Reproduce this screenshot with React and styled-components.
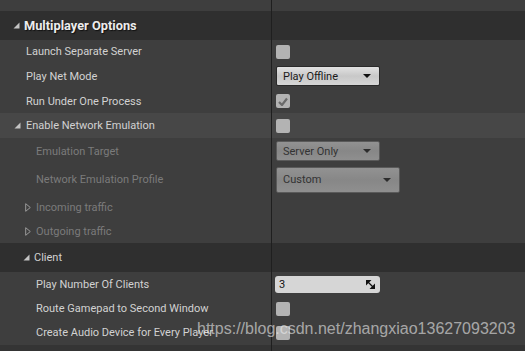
import React from "react";
import styled, { createGlobalStyle, css } from "styled-components";

const Global = createGlobalStyle`
  html, body { margin: 0; padding: 0; background: #3d3d3d; }
  body { width: 525px; height: 351px; overflow: hidden; font-family: Roboto, "Noto Sans", sans-serif; }
`;

const Panel = styled.div`
  position: relative;
  width: 525px;
  height: 351px;
  display: flex;
  flex-direction: column;
  background: #3d3d3d;
  overflow: hidden;
`;

const bgFor = {
  header: "#2f2f2f",
  normal: "#3e3e3e",
  hover: "#474747",
  bottom: "#343434",
};

const Row = styled.div`
  display: flex;
  flex: 0 0 ${(p) => p.$h}px;
  height: ${(p) => p.$h}px;
  background: ${(p) => bgFor[p.$variant || "normal"]};
`;

const NameCell = styled.div`
  width: 272px;
  flex: 0 0 272px;
  display: flex;
  align-items: center;
  padding-left: ${(p) => p.$indent}px;
  box-sizing: border-box;
  border-right: 1px solid #1f1f1f;
  font-size: 11px;
  color: ${(p) => (p.$dim ? "#7b7b7b" : "#d2d2d2")};
  white-space: nowrap;
  ${(p) =>
    p.$bold &&
    css`
      font-weight: 700;
      font-size: 12.8px;
      color: #ececec;
      text-shadow: 1px 1px 1px #111;
    `}
`;

const ValueCell = styled.div`
  flex: 1;
  display: flex;
  align-items: center;
  padding-left: 4px;
`;

const Arrow = styled.svg`
  flex: 0 0 auto;
  margin-right: ${(p) => p.$gap}px;
`;

const Checkbox = styled.div`
  width: 14px;
  height: 14px;
  border-radius: 2px;
  background: #b3b3b3;
  display: flex;
  align-items: center;
  justify-content: center;
`;

const Combo = styled.div`
  box-sizing: border-box;
  width: ${(p) => p.$w}px;
  height: ${(p) => p.$h}px;
  border: 1px solid ${(p) => (p.$dim ? "#5a5a5a" : "#2a2a2a")};
  border-radius: 2px;
  background: ${(p) =>
    p.$dim
      ? "linear-gradient(#929292, #878787 50%, #8f8f8f)"
      : "linear-gradient(#e2e2e2, #c8c8c8 50%, #d6d6d6)"};
  display: flex;
  align-items: center;
  justify-content: space-between;
  padding: 0 8px 0 6px;
  font-size: 11px;
  color: ${(p) => (p.$dim ? "#333" : "#1a1a1a")};
`;

const Caret = styled.span`
  width: 0;
  height: 0;
  border-left: 4px solid transparent;
  border-right: 4px solid transparent;
  border-top: 4px solid ${(p) => (p.$dim ? "#2c2c2c" : "#111")};
`;

const NumberField = styled.div`
  box-sizing: border-box;
  width: 105px;
  height: 17px;
  margin-left: -1px;
  border-radius: 3px;
  background: #d6d6d6;
  display: flex;
  align-items: center;
  justify-content: space-between;
  padding: 0 5px 0 4px;
  font-size: 11px;
  color: #111;
`;

const Watermark = styled.div`
  position: absolute;
  left: 197px;
  top: 320px;
  font-family: "Liberation Sans", Arial, sans-serif;
  font-size: 16px;
  color: rgba(235, 235, 235, 0.62);
  white-space: nowrap;
  pointer-events: none;
`;

const Expanded = ({ gap = 4 }) => (
  <Arrow $gap={gap} width="7" height="7" viewBox="0 0 7 7">
    <polygon points="6.5,0.5 6.5,6.5 0.5,6.5" fill="#c4c4c4" />
  </Arrow>
);

const Collapsed = ({ gap = 5 }) => (
  <Arrow $gap={gap} width="6" height="9" viewBox="0 0 6 9">
    <polygon points="0.7,0.7 5.3,4.5 0.7,8.3" fill="none" stroke="#9a9a9a" strokeWidth="1" />
  </Arrow>
);

const Check = () => (
  <svg width="10" height="9" viewBox="0 0 10 9">
    <path d="M1 5 L4 8 L9 1.5" fill="none" stroke="#6b6b6b" strokeWidth="2.2" />
  </svg>
);

const Resize = () => (
  <svg width="9" height="9" viewBox="0 0 9 9">
    <polygon points="0,0 5.5,0 0,5.5" fill="#111" />
    <polygon points="9,9 3.5,9 9,3.5" fill="#111" />
    <line x1="1" y1="1" x2="8" y2="8" stroke="#111" strokeWidth="1.3" />
  </svg>
);

export default function App() {
  return (
    <>
      <Global />
      <Panel>
        <Row $h={11}>
          <NameCell />
          <ValueCell />
        </Row>
        <Row $h={29} $variant="header">
          <NameCell $indent={13} $bold>
            <Expanded />
            Multiplayer Options
          </NameCell>
          <ValueCell />
        </Row>
        <Row $h={23}>
          <NameCell $indent={26}>Launch Separate Server</NameCell>
          <ValueCell>
            <Checkbox />
          </ValueCell>
        </Row>
        <Row $h={26}>
          <NameCell $indent={26}>Play Net Mode</NameCell>
          <ValueCell>
            <Combo $w={104} $h={20}>
              Play Offline
              <Caret />
            </Combo>
          </ValueCell>
        </Row>
        <Row $h={24}>
          <NameCell $indent={26}>Run Under One Process</NameCell>
          <ValueCell>
            <Checkbox>
              <Check />
            </Checkbox>
          </ValueCell>
        </Row>
        <Row $h={25} $variant="hover">
          <NameCell $indent={14}>
            <Expanded gap={5} />
            Enable Network Emulation
          </NameCell>
          <ValueCell>
            <Checkbox />
          </ValueCell>
        </Row>
        <Row $h={26}>
          <NameCell $indent={36} $dim>
            Emulation Target
          </NameCell>
          <ValueCell>
            <Combo $w={104} $h={20} $dim>
              Server Only
              <Caret $dim />
            </Combo>
          </ValueCell>
        </Row>
        <Row $h={31}>
          <NameCell $indent={36} $dim>
            Network Emulation Profile
          </NameCell>
          <ValueCell>
            <Combo $w={124} $h={26} $dim>
              Custom
              <Caret $dim />
            </Combo>
          </ValueCell>
        </Row>
        <Row $h={24}>
          <NameCell $indent={25} $dim>
            <Collapsed />
            Incoming traffic
          </NameCell>
          <ValueCell />
        </Row>
        <Row $h={24}>
          <NameCell $indent={25} $dim>
            <Collapsed />
            Outgoing traffic
          </NameCell>
          <ValueCell />
        </Row>
        <Row $h={29} $variant="header">
          <NameCell $indent={23}>
            <Expanded gap={4} />
            Client
          </NameCell>
          <ValueCell />
        </Row>
        <Row $h={25}>
          <NameCell $indent={36}>Play Number Of Clients</NameCell>
          <ValueCell>
            <NumberField>
              3
              <Resize />
            </NumberField>
          </ValueCell>
        </Row>
        <Row $h={23}>
          <NameCell $indent={36}>Route Gamepad to Second Window</NameCell>
          <ValueCell>
            <Checkbox />
          </ValueCell>
        </Row>
        <Row $h={25}>
          <NameCell $indent={36}>Create Audio Device for Every Player</NameCell>
          <ValueCell>
            <Checkbox />
          </ValueCell>
        </Row>
        <Row $h={6} $variant="bottom">
          <NameCell />
          <ValueCell />
        </Row>
        <Watermark>https://blog.csdn.net/zhangxiao13627093203</Watermark>
      </Panel>
    </>
  );
}
